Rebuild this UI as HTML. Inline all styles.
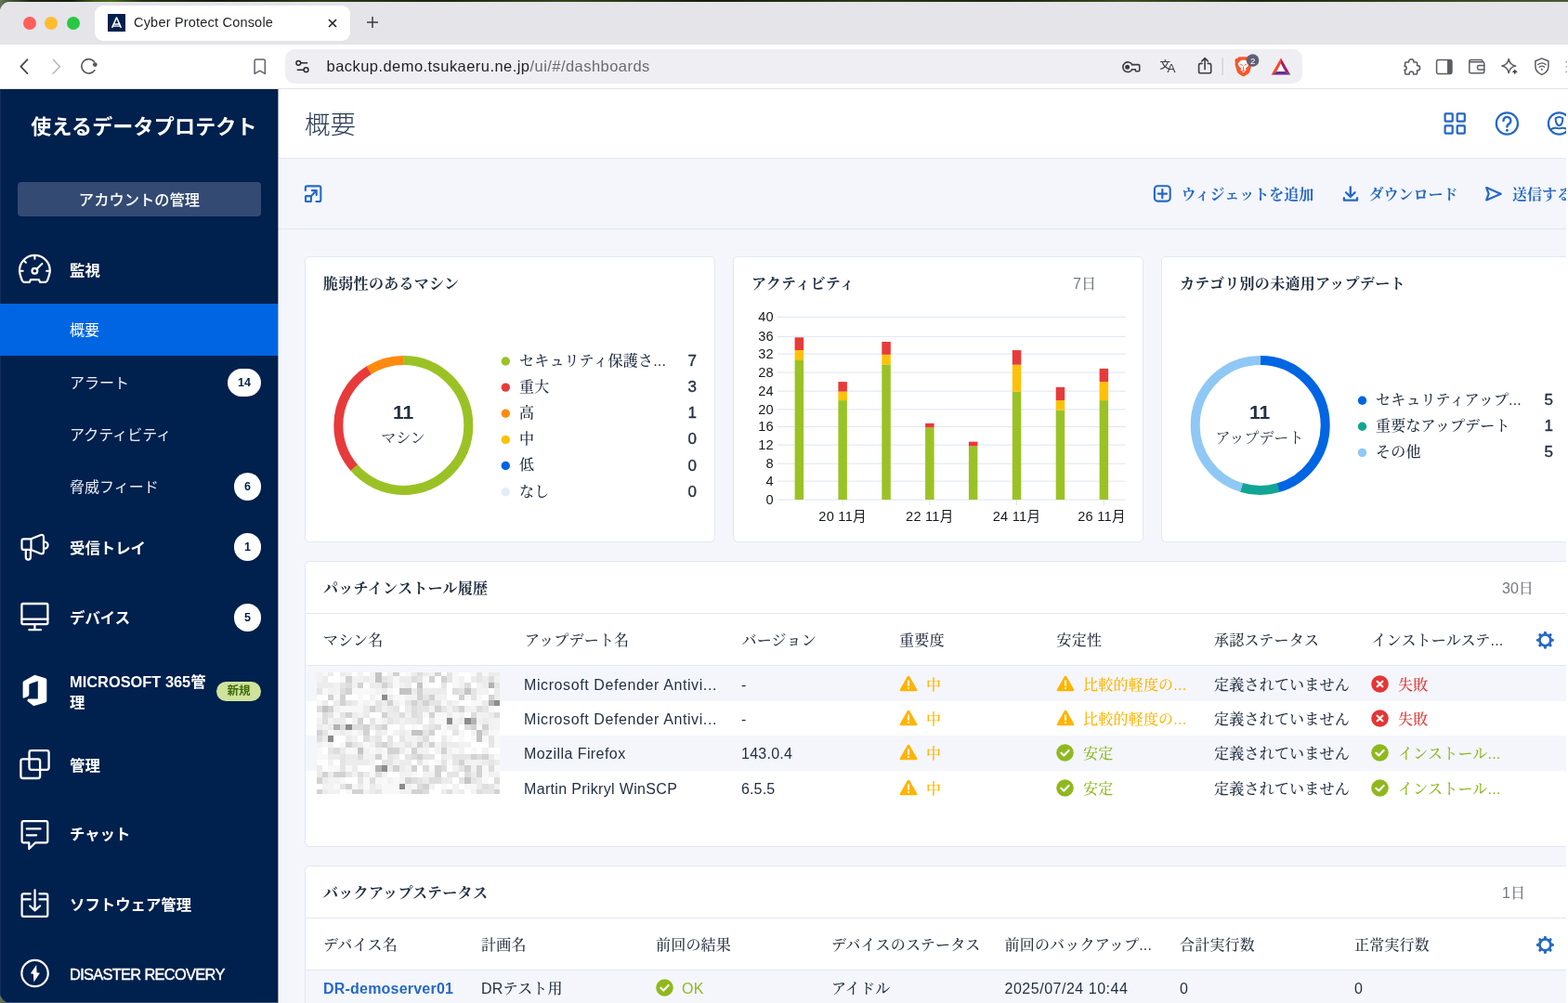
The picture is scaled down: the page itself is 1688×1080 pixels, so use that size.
<!DOCTYPE html>
<html lang="ja">
<head>
<meta charset="utf-8">
<title>Cyber Protect Console</title>
<style>
*{box-sizing:border-box;margin:0;padding:0}
html,body{width:1688px;height:1080px;overflow:hidden;background:#1d2a14}
body{background:linear-gradient(90deg,#66745a 0,#4d5b40 .5%,#1b2613 2%,#141c0e 4.5%,#3d5a17 6%,#4b6a1c 7%,#243212 9%,#131a0d 14%,#2c3d18 20%,#1a2410 28%,#33461c 36%,#151d0e 45%,#2a3a17 55%,#1a2410 64%,#3a4f1e 72%,#1c2711 80%,#2e4019 90%,#4a5a36 100%)}
body{position:relative;font-family:"Liberation Sans","Noto Sans CJK JP",sans-serif;color:#243143}
.abs{position:absolute}
#win{will-change:transform;position:absolute;left:0;top:2px;width:1688px;height:1078px;background:#fff;border-radius:11px 0 0 11px;overflow:hidden}
/* ---------- browser chrome ---------- */
#tabstrip{position:absolute;left:0;top:0;width:1688px;height:46px;background:#e4e4e9}
.tl{position:absolute;top:16px;width:14px;height:14px;border-radius:50%}
#tab{position:absolute;left:102px;top:4px;width:275px;height:38px;background:#fff;border-radius:9px}
#tabtitle{position:absolute;left:144px;top:14.4px;font-size:14.5px;letter-spacing:.2px;line-height:17px;color:#1f2023;white-space:nowrap}
#navbar{position:absolute;left:0;top:46px;width:1688px;height:48px;background:#fff;border-bottom:1px solid #e2e3e8}
#urlbar{position:absolute;left:307px;top:5px;width:1095px;height:37px;background:#efeff3;border-radius:10px}
#url{position:absolute;left:44.5px;top:9px;font-size:16.5px;letter-spacing:.45px;line-height:19px;color:#1f2023;white-space:nowrap}
#url span{color:#6a6b70}
/* ---------- sidebar ---------- */
#side{position:absolute;left:0;top:94.3px;width:299px;height:983.7px;background:#00204d;color:#fff;box-shadow:inset 1px 0 0 #132e5b,inset 0 -1px 0 #3d5479,1px 0 0 #8f9db2}
#brand{position:absolute;left:0;top:26px;width:299px;text-align:center;font-size:22px;font-weight:700;line-height:30px;letter-spacing:.2px;padding-left:11px}
#acct{position:absolute;left:19px;top:100px;width:262px;height:37px;border-radius:4px;background:#334a73;font-size:16.3px;font-weight:500;line-height:38px;text-align:center}
.nav{position:absolute;left:75px;font-size:16.4px;font-weight:700;line-height:24px;white-space:nowrap}
.sub{position:absolute;left:75px;font-size:16px;font-weight:400;line-height:24px;white-space:nowrap;color:#e9eef7}
#active{position:absolute;left:0;top:231px;width:299px;box-shadow:1px 0 0 #8fb4ee;height:56px;background:#0065e3}
.badge{position:absolute;height:30px;min-width:30px;border-radius:15px;background:#fff;color:#00204d;font-size:12.5px;font-weight:700;line-height:30px;text-align:center}
.ico{position:absolute}
/* ---------- main ---------- */
#main{position:absolute;left:300px;top:94px;width:1386.4px;height:984px;background:#f4f6fb;overflow:hidden;font-family:"Liberation Sans","Noto Serif CJK JP","Noto Serif CJK SC",serif}
#hdr{position:absolute;left:0;top:0;width:1388px;height:75px;background:#fff;border-bottom:1px solid #e1e8f4}
#ttl{position:absolute;left:28px;top:19px;font-family:"Liberation Sans","Noto Sans CJK JP",sans-serif;font-weight:300;font-size:27.5px;line-height:40px;color:#2b3a52}
#tbar{position:absolute;left:0;top:75px;width:1388px;height:76px;border-bottom:1px solid #e1e8f4}
.tb{position:absolute;top:102px;font-size:16px;font-weight:700;line-height:24px;color:#2668c5;white-space:nowrap}
.card{position:absolute;background:#fff;border:1px solid #e1e8f3;border-radius:5px}
.ct{position:absolute;left:19px;top:17px;font-size:16px;font-weight:700;letter-spacing:.3px;line-height:24px;color:#243143;white-space:nowrap}
.cr{position:absolute;top:17px;font-size:16px;font-weight:500;line-height:24px;color:#757a83;white-space:nowrap}
#ov{position:absolute;left:-300px;top:-96px;width:1688px;height:1080px}
.dn{position:absolute;width:100px;text-align:center;font-size:21px;font-weight:700;line-height:28px;color:#243143}
.dl{position:absolute;width:100px;text-align:center;font-size:16px;line-height:24px;color:#243143;white-space:nowrap}
.lg{position:absolute;margin-top:.4px;font-size:16px;font-weight:500;letter-spacing:.2px;line-height:24px;color:#243143;white-space:nowrap}
.ln{position:absolute;width:50px;text-align:right;font-size:17px;line-height:24px;color:#243143;margin-top:.5px;-webkit-text-stroke:.35px #243143}
.hl{position:absolute;height:1px;background:#e1e8f3}
.rowbg{position:absolute;background:#f4f6fb}
.th{position:absolute;font-size:16px;font-weight:500;letter-spacing:.2px;line-height:24px;color:#2b3645;white-space:nowrap}
.td{position:absolute;font-size:16px;font-weight:500;letter-spacing:.22px;margin-top:.7px;line-height:24px;color:#243143;white-space:nowrap}
</style>
</head>
<body>
<div id="win">
  <!-- BROWSER CHROME -->
  <div id="tabstrip">
    <div class="tl" style="left:25px;background:#fe5f57"></div>
    <div class="tl" style="left:48px;background:#febc2e"></div>
    <div class="tl" style="left:72px;background:#28c840"></div>
    <div id="tab"></div>
    <svg class="abs" style="left:115.6px;top:13.4px" width="19" height="19" viewBox="0 0 19 19"><rect width="19" height="19" fill="#00204d"/><path d="M4.6 14.9L9.5 3.9L14.4 14.9M5.6 10.9H13.4M4.7 13.1H14.3" stroke="#fff" stroke-width="1.45" fill="none" stroke-linejoin="round"/></svg>
    <div id="tabtitle">Cyber Protect Console</div>
    <svg class="abs" style="left:352px;top:17px" width="12" height="12" viewBox="0 0 12 12"><path d="M2 2 L10 10 M10 2 L2 10" stroke="#1f2023" stroke-width="1.6" fill="none"/></svg>
    <svg class="abs" style="left:394px;top:15px" width="14" height="14" viewBox="0 0 14 14"><path d="M7 1 V13 M1 7 H13" stroke="#3a3b40" stroke-width="1.5" fill="none"/></svg>
  </div>
  <div id="navbar">
<div id="urlbar"><div id="url">backup.demo.tsukaeru.ne.jp<span>/ui/#/dashboards</span></div></div>
    <svg class="abs" style="left:0;top:0" width="1688" height="48" viewBox="0 48 1688 48" fill="none" stroke-linecap="round" stroke-linejoin="round">
    <!-- back / forward / reload -->
    <path d="M29.5 64.2L22.4 71.7L29.5 79.1" stroke="#494b51" stroke-width="1.9"/>
    <path d="M57.3 64.2L64.4 71.7L57.3 79.1" stroke="#b4b5ba" stroke-width="1.5"/>
    <path d="M101.9 75.6A7.7 7.7 0 1 1 101.6 66.6" stroke="#55575d" stroke-width="1.7"/>
    <circle cx="102.3" cy="69.6" r="2.4" fill="#55575d"/>
    <!-- bookmark -->
    <path d="M274.1 79.4V65.6Q274.1 63.9 275.8 63.9H283.6Q285.3 63.9 285.3 65.6V79.4L279.7 76.2Z" stroke="#5f6368" stroke-width="1.5"/>
    <!-- tune -->
    <g stroke="#2a2b2f" stroke-width="1.5"><circle cx="321.3" cy="67.8" r="2.4"/><path d="M324 67.8H330.6M320.3 75.2H326.9"/><circle cx="329.5" cy="75.2" r="2.4"/></g>
    <!-- key -->
    <g stroke="#3c3d42" stroke-width="1.6"><path d="M1218.6 69.6H1225.6Q1226.7 69.6 1226.7 70.7V75.6Q1226.7 76.7 1225.6 76.7H1223.2Q1222.4 76.7 1222.4 75.9V74.8H1218.6"/><path d="M1218.8 69.6A5.3 5.3 0 1 0 1218.8 74.8"/><circle cx="1213.6" cy="72.2" r="1.7" fill="#3c3d42"/></g>
    <!-- share -->
    <g stroke="#3c3d42" stroke-width="1.6"><path d="M1294 68.4H1292.4Q1290.6 68.4 1290.6 70.2V77Q1290.6 78.8 1292.4 78.8H1301.9Q1303.7 78.8 1303.7 77V70.2Q1303.7 68.4 1301.9 68.4H1300.3"/><path d="M1297.1 74.6V62.8M1293.8 65.9L1297.1 62.6L1300.4 65.9"/></g>
    <path d="M1316.2 62.4V80.6" stroke="#c6c7cd" stroke-width="1"/>
    <!-- brave -->
    <path d="M1333.6 61.2H1343.6L1345.2 63L1346.9 62.9L1347.9 65.6L1347.3 67.2L1347.8 68.9L1345.4 77.2Q1344.8 78.6 1343.6 79.4L1339.6 82.1Q1338.6 82.6 1337.6 82.1L1333.6 79.4Q1332.4 78.6 1331.8 77.2L1329.4 68.9L1329.9 67.2L1329.3 65.6L1330.3 62.9L1332 63Z" fill="#fb542b" stroke="none"/>
    <path d="M1338.6 64.6L1341.8 65.2L1344.6 68.6L1343.4 71.6L1341 73.6L1341.6 75.6L1338.6 78.4L1335.6 75.6L1336.2 73.6L1333.8 71.6L1332.6 68.6L1335.4 65.2Z" fill="#fff" stroke="none"/>
    <path d="M1335.6 69.4L1337.4 70.2M1341.6 69.4L1339.8 70.2M1338.6 72V75.4M1337.2 76.2H1340" stroke="#fb542b" stroke-width="1"/>
    <circle cx="1348.6" cy="65" r="6.8" fill="#5e6173" stroke="none"/>
    <!-- BAT -->
    <path d="M1378.9 62.4L1368.6 80.6L1378.9 74.6Z" fill="#ff4724" stroke="none"/>
    <path d="M1378.9 62.4L1389.2 80.6L1378.9 74.6Z" fill="#9e1f63" stroke="none"/>
    <path d="M1368.6 80.6H1389.2L1378.9 74.6Z" fill="#662d91" stroke="none"/>
    <path d="M1378.9 68.6L1374.2 77H1383.6Z" fill="#fff" stroke="none"/>
    <!-- puzzle -->
    <path d="M1516.6 66.4A2.7 2.7 0 0 1 1522 66.4V67H1524.6Q1525.6 67 1525.6 68V70.6H1526A2.6 2.6 0 0 1 1526 75.8H1525.6V79Q1525.6 80 1524.6 80H1521.6V79.2A2.2 2.2 0 0 0 1517.2 79.2V80H1513.6Q1512.6 80 1512.6 79V75.6H1511.8A2.3 2.3 0 0 0 1511.8 71H1512.6V68Q1512.6 67 1513.6 67H1516.6Z" stroke="#5a5d63" stroke-width="1.6"/>
    <!-- sidebar panel -->
    <rect x="1546.6" y="64.6" width="16.2" height="14.8" rx="1.6" stroke="#5a5d63" stroke-width="1.5"/><path d="M1558.8 64.6H1561.6Q1562.8 64.6 1562.8 65.8V78.2Q1562.8 79.4 1561.6 79.4H1558.8Z" fill="#5a5d63" stroke="#5a5d63" stroke-width="1"/>
    <!-- wallet -->
    <g stroke="#5a5d63" stroke-width="1.5"><path d="M1581.8 66.8V77.2Q1581.8 78.8 1583.4 78.8H1596.2Q1597.8 78.8 1597.8 77.2V68.4Q1597.8 66.8 1596.2 66.8H1583.4Q1581.8 66.8 1581.8 65.6Q1581.8 64.4 1583.4 64.4H1594.6Q1596 64.4 1596.2 66.4"/><path d="M1597.8 70.4H1592.2Q1590.6 70.4 1590.6 72V73.4Q1590.6 75 1592.2 75H1597.8"/></g>
    <!-- sparkle -->
    <path d="M1624.2 63.4Q1625.2 69.8 1631.6 71Q1625.2 72.2 1624.2 78.6Q1623.2 72.2 1616.8 71Q1623.2 69.8 1624.2 63.4Z" stroke="#5a5d63" stroke-width="1.5"/>
    <path d="M1630.8 74.2Q1631.3 76.8 1633.9 77.3Q1631.3 77.8 1630.8 80.4Q1630.3 77.8 1627.7 77.3Q1630.3 76.8 1630.8 74.2Z" fill="#45474c" stroke="none"/>
    <!-- shield wifi -->
    <path d="M1659.9 62.9L1666.9 65.7V71.4Q1666.9 77.4 1659.9 80.4Q1652.9 77.4 1652.9 71.4V65.7Z" stroke="#5a5d63" stroke-width="1.5"/>
    <path d="M1655.6 69.6Q1659.9 66.2 1664.2 69.6M1657.2 72.2Q1659.9 70.2 1662.6 72.2" stroke="#5a5d63" stroke-width="1.3"/><circle cx="1659.9" cy="74.8" r="1" fill="#5a5d63"/>
    <!-- menu dots (clipped) -->
    <path d="M1686.2 66.6V66.7M1686.2 72V72.1M1686.2 77.4V77.5" stroke="#9a9ca2" stroke-width="1.6"/>
    </svg>
    <div class="abs" style="left:1248.5px;top:15px;font-size:11.5px;line-height:14px;color:#3c3d42;font-family:'Liberation Sans','Noto Sans CJK JP',sans-serif;font-weight:500">文</div>
    <div class="abs" style="left:1256.6px;top:19.4px;font-size:13.5px;line-height:14px;color:#3c3d42">A</div>
    <div class="abs" style="left:1343.6px;top:11.6px;width:10px;text-align:center;font-size:9.5px;line-height:11px;color:#fff">2</div>

  </div>

  <!-- SIDEBAR -->
  <div id="side">
<svg class="abs" style="left:0;top:0" width="299" height="984" viewBox="0 96 299 984" fill="none" stroke="#fff" stroke-width="2.2" stroke-linecap="round" stroke-linejoin="round">
<!-- gauge (監視) -->
<g transform="translate(19.5 273.5)">
<path d="M12.3 30.3H7.2C5.4 30.3 4.6 29.6 4.1 28C2.6 24 1.5 21 1.5 17.8A16.4 16.4 0 0 1 34.3 17.8C34.3 21 33.2 24 31.7 28C31.2 29.6 30.4 30.3 28.6 30.3H23.6L22.4 27.7H13.5Z"/>
<circle cx="17.9" cy="18.3" r="2.9"/>
<path d="M20 16.2L25.8 10.4M17.9 2.4V5.2M2.6 18.3H5.2M30.6 18.3H33.2M6.6 7.4L8.4 9.2" stroke-width="2.1"/>
</g>
<!-- megaphone (受信トレイ) -->
<g transform="translate(20 574)">
<path d="M13.5 6.3H5.5Q3.5 6.3 3.5 8.3V15.9Q3.5 17.9 5.5 17.9H13.5ZM13.5 6.3L23.4 2.2Q26.9 1 27 4.6V19.6Q26.9 23.2 23.4 22L13.5 17.9"/>
<path d="M28 9.5A3.6 3.6 0 0 1 28 16.7"/>
<path d="M7.8 18.2V26A2.55 2.55 0 0 0 12.9 26V19.6"/>
</g>
<!-- monitor (デバイス) -->
<g transform="translate(20 646)" stroke-width="2.3">
<rect x="3.4" y="4" width="28" height="22.2" rx="1.6"/>
<path d="M3.4 20.6H31.4M17.4 26.2V32.2M11.4 32.2H23.9"/>
</g>
<!-- office -->
<path transform="translate(20 724)" fill="#fff" stroke="none" d="M17.3 2.8L28.9 6.3Q30.3 6.8 30.3 8.2V30.4Q30.3 31.9 28.9 32.4L16.8 36Q16.2 36.1 15.7 35.7L9.9 31.2Q9 30.4 9.6 29.4L10.4 28.5H20.8V9.3L12.4 12.2Q11.3 12.6 11.3 13.8V23.6Q11.3 25.2 9.9 25.9L6.2 27.6Q4.6 28.2 4.6 26.4V11Q4.6 9.9 5.7 9.3Z"/>
<!-- management (管理) -->
<g stroke-width="2.3">
<rect x="31.5" y="808.1" width="21.1" height="20.7" rx="2.2"/>
<rect x="22.4" y="817.4" width="20.7" height="20.6" rx="2.2"/>
</g>
<!-- chat -->
<g>
<path d="M25.4 884.1H49.5Q51.3 884.1 51.3 885.9V905.5Q51.3 907.3 49.5 907.3H38.2L31.3 914V907.3H25.4Q23.6 907.3 23.6 905.5V885.9Q23.6 884.1 25.4 884.1Z"/>
<path d="M28.8 892.4H43.6M28.8 899.3H39.2"/>
</g>
<!-- software mgmt -->
<g>
<path d="M32.7 962.4H25.4Q23.6 962.4 23.6 964.2V985.1Q23.6 986.9 25.4 986.9H49.5Q51.3 986.9 51.3 985.1V964.2Q51.3 962.4 49.5 962.4H42.4M23.6 968.4H32.7M42.4 968.4H51.3"/>
<path d="M37.55 958.4V980.2M32.2 975.5L37.55 980.4L43.1 975.5"/>
</g>
<!-- disaster recovery -->
<circle cx="37.55" cy="1048" r="14.2"/>
<path fill="#fff" stroke="none" d="M39.2 1039L32.9 1048.2L35.9 1048.7L36.4 1057.5L42.9 1047.8L39.6 1047.3Z"/>
</svg>
    <div id="brand">使えるデータプロテクト</div>
    <div id="acct">アカウントの管理</div>
    <div id="active"></div>
    <div class="nav" style="top:182.5px">監視</div>
    <div class="sub" style="top:248px;color:#fff">概要</div>
    <div class="sub" style="top:304.7px">アラート</div>
    <div class="sub" style="top:361px">アクティビティ</div>
    <div class="sub" style="top:417.2px">脅威フィード</div>
    <div class="nav" style="top:482px">受信トレイ</div>
    <div class="nav" style="top:557px">デバイス</div>
    <div class="nav" style="top:626.5px;line-height:22.2px">MICROSOFT 365管<br>理</div>
    <div class="nav" style="top:716.2px">管理</div>
    <div class="nav" style="top:789.6px">チャット</div>
    <div class="nav" style="top:865.7px">ソフトウェア管理</div>
    <div class="nav" style="top:941px;font-weight:400;font-size:16.4px;letter-spacing:-.68px;-webkit-text-stroke:.4px #fff">DISASTER RECOVERY</div>
    <div class="badge" style="left:245px;top:300.5px;width:36px">14</div>
    <div class="badge" style="left:252px;top:412.5px;min-width:29px">6</div>
    <div class="badge" style="left:252px;top:478px;min-width:29px">1</div>
    <div class="badge" style="left:252px;top:553.5px;min-width:29px">5</div>
    <div class="badge" style="left:233px;top:637.3px;width:48px;height:21px;line-height:21px;background:#cfe39a;color:#3f6b0c;font-size:12.5px">新規</div>
  </div>

  <!-- MAIN -->
  <div id="main">
    <div class="abs" style="left:0;top:0;width:1px;height:984px;background:#fff"></div>
    <div id="hdr"><div id="ttl">概要</div></div>
    <div id="tbar"></div>
    <div class="tb" style="left:971.5px">ウィジェットを追加</div>
    <div class="tb" style="left:1173.5px">ダウンロード</div>
    <div class="tb" style="left:1328px">送信する</div>

    <div class="card" id="c1" style="left:28px;top:180px;width:442px;height:308px"><div class="ct">脆弱性のあるマシン</div></div>
    <div class="card" id="c2" style="left:489px;top:180px;width:442px;height:308px"><div class="ct">アクティビティ</div><div class="cr" style="left:365px">7日</div></div>
    <div class="card" id="c3" style="left:950px;top:180px;width:460px;height:308px"><div class="ct">カテゴリ別の未適用アップデート</div></div>
    <div class="card" id="c4" style="left:28px;top:508px;width:1400px;height:308px"><div class="ct">パッチインストール履歴</div><div class="cr" style="left:1288px">30日</div></div>
    <div class="card" id="c5" style="left:28px;top:836px;width:1400px;height:308px"><div class="ct">バックアップステータス</div><div class="cr" style="left:1288px">1日</div></div>
<div id="ov">
<svg class="abs" style="left:0;top:0" width="1688" height="1080" viewBox="0 0 1688 1080">
<!-- donut 1 -->
<circle cx="434.3" cy="457.9" r="70" fill="none" stroke="#9bc225" stroke-width="10" stroke-dasharray="280.29 159.54" stroke-dashoffset="0.00" transform="rotate(-90 434.3 457.9)"/>
<circle cx="434.3" cy="457.9" r="70" fill="none" stroke="#e83a3a" stroke-width="10" stroke-dasharray="120.35 319.47" stroke-dashoffset="-279.89" transform="rotate(-90 434.3 457.9)"/>
<circle cx="434.3" cy="457.9" r="70" fill="none" stroke="#ff8a0f" stroke-width="10" stroke-dasharray="40.38 399.44" stroke-dashoffset="-399.84" transform="rotate(-90 434.3 457.9)"/>
<!-- donut 3 -->
<circle cx="1356.7" cy="457.9" r="70" fill="none" stroke="#0065e3" stroke-width="10" stroke-dasharray="200.32 239.50" stroke-dashoffset="0.00" transform="rotate(-90 1356.7 457.9)"/>
<circle cx="1356.7" cy="457.9" r="70" fill="none" stroke="#12a594" stroke-width="10" stroke-dasharray="40.38 399.44" stroke-dashoffset="-199.92" transform="rotate(-90 1356.7 457.9)"/>
<circle cx="1356.7" cy="457.9" r="70" fill="none" stroke="#8fc8f5" stroke-width="10" stroke-dasharray="200.32 239.50" stroke-dashoffset="-239.90" transform="rotate(-90 1356.7 457.9)"/>
<circle cx="544.3" cy="389.0" r="4.7" fill="#9bc225"/>
<circle cx="544.3" cy="417.1" r="4.7" fill="#e83a3a"/>
<circle cx="544.3" cy="445.3" r="4.7" fill="#ff8a0f"/>
<circle cx="544.3" cy="473.4" r="4.7" fill="#ffc107"/>
<circle cx="544.3" cy="501.5" r="4.7" fill="#0065e3"/>
<circle cx="544.3" cy="529.7" r="4.7" fill="#e4ecfb"/>
<circle cx="1466.5" cy="431.3" r="4.7" fill="#0065e3"/>
<circle cx="1466.5" cy="459.3" r="4.7" fill="#12a594"/>
<circle cx="1466.5" cy="487.4" r="4.7" fill="#8fc8f5"/>
</svg>
<div class="dn" style="left:384px;top:430px">11</div><div class="dl" style="left:384px;top:460px">マシン</div>
<div class="dn" style="left:1306px;top:430px">11</div><div class="dl" style="left:1306px;top:460px">アップデート</div>
<div class="lg" style="left:559px;top:376.5px">セキュリティ保護さ...</div><div class="ln" style="left:700px;top:376.5px">7</div>
<div class="lg" style="left:559px;top:404.6px">重大</div><div class="ln" style="left:700px;top:404.6px">3</div>
<div class="lg" style="left:559px;top:432.8px">高</div><div class="ln" style="left:700px;top:432.8px">1</div>
<div class="lg" style="left:559px;top:460.9px">中</div><div class="ln" style="left:700px;top:460.9px">0</div>
<div class="lg" style="left:559px;top:489.0px">低</div><div class="ln" style="left:700px;top:489.0px">0</div>
<div class="lg" style="left:559px;top:517.2px">なし</div><div class="ln" style="left:700px;top:517.2px">0</div>
<div class="lg" style="left:1481px;top:418.8px">セキュリティアップ...</div><div class="ln" style="left:1622px;top:418.8px">5</div>
<div class="lg" style="left:1481px;top:446.8px">重要なアップデート</div><div class="ln" style="left:1622px;top:446.8px">1</div>
<div class="lg" style="left:1481px;top:474.9px">その他</div><div class="ln" style="left:1622px;top:474.9px">5</div>
<svg class="abs" style="left:0;top:0" width="1688" height="1080" viewBox="0 0 1688 1080" shape-rendering="auto">
<!-- bar chart -->
<rect x="836.7" y="340.8" width="375.1" height="1" fill="#dde5f3"/>
<rect x="836.7" y="361.8" width="375.1" height="1" fill="#dde5f3"/>
<rect x="836.7" y="380.6" width="375.1" height="1" fill="#dde5f3"/>
<rect x="836.7" y="400.5" width="375.1" height="1" fill="#dde5f3"/>
<rect x="836.7" y="420.6" width="375.1" height="1" fill="#dde5f3"/>
<rect x="836.7" y="440.4" width="375.1" height="1" fill="#dde5f3"/>
<rect x="836.7" y="459.0" width="375.1" height="1" fill="#dde5f3"/>
<rect x="836.7" y="478.6" width="375.1" height="1" fill="#dde5f3"/>
<rect x="836.7" y="498.7" width="375.1" height="1" fill="#dde5f3"/>
<rect x="836.7" y="517.6" width="375.1" height="1" fill="#dde5f3"/>
<rect x="836.7" y="537.6" width="375.1" height="1" fill="#dde5f3"/>
<rect x="906.6" y="538" width="1" height="6" fill="#dde5f3"/>
<rect x="1000.3" y="538" width="1" height="6" fill="#dde5f3"/>
<rect x="1094.0" y="538" width="1" height="6" fill="#dde5f3"/>
<rect x="1187.8" y="538" width="1" height="6" fill="#dde5f3"/>
<rect x="855.6" y="388.0" width="9.5" height="150.0" fill="#9bc225"/>
<rect x="855.6" y="377.1" width="9.5" height="10.9" fill="#ffc107"/>
<rect x="855.6" y="363.3" width="9.5" height="13.8" fill="#e83a3a"/>
<rect x="902.4" y="431.1" width="9.5" height="106.9" fill="#9bc225"/>
<rect x="902.4" y="421.6" width="9.5" height="9.5" fill="#ffc107"/>
<rect x="902.4" y="411.1" width="9.5" height="10.5" fill="#e83a3a"/>
<rect x="949.3" y="392.4" width="9.5" height="145.6" fill="#9bc225"/>
<rect x="949.3" y="381.8" width="9.5" height="10.6" fill="#ffc107"/>
<rect x="949.3" y="368.0" width="9.5" height="13.8" fill="#e83a3a"/>
<rect x="996.1" y="460.4" width="9.5" height="77.6" fill="#9bc225"/>
<rect x="996.1" y="455.8" width="9.5" height="4.6" fill="#e83a3a"/>
<rect x="1042.9" y="480.4" width="9.5" height="57.6" fill="#9bc225"/>
<rect x="1042.9" y="475.6" width="9.5" height="4.8" fill="#e83a3a"/>
<rect x="1089.8" y="421.6" width="9.5" height="116.4" fill="#9bc225"/>
<rect x="1089.8" y="392.7" width="9.5" height="28.9" fill="#ffc107"/>
<rect x="1089.8" y="377.1" width="9.5" height="15.6" fill="#e83a3a"/>
<rect x="1136.7" y="441.6" width="9.5" height="96.4" fill="#9bc225"/>
<rect x="1136.7" y="431.1" width="9.5" height="10.5" fill="#ffc107"/>
<rect x="1136.7" y="416.9" width="9.5" height="14.2" fill="#e83a3a"/>
<rect x="1183.6" y="431.1" width="9.5" height="106.9" fill="#9bc225"/>
<rect x="1183.6" y="411.1" width="9.5" height="20.0" fill="#ffc107"/>
<rect x="1183.6" y="396.9" width="9.5" height="14.2" fill="#e83a3a"/>
<g font-family="Liberation Sans, Noto Sans CJK JP, sans-serif" font-size="14.6" letter-spacing=".25" fill="#15181c">
<text x="832.9" y="345.9" text-anchor="end">40</text>
<text x="832.9" y="366.9" text-anchor="end">36</text>
<text x="832.9" y="385.7" text-anchor="end">32</text>
<text x="832.9" y="405.6" text-anchor="end">28</text>
<text x="832.9" y="425.7" text-anchor="end">24</text>
<text x="832.9" y="445.5" text-anchor="end">20</text>
<text x="832.9" y="464.1" text-anchor="end">16</text>
<text x="832.9" y="483.7" text-anchor="end">12</text>
<text x="832.9" y="503.8" text-anchor="end">8</text>
<text x="832.9" y="522.7" text-anchor="end">4</text>
<text x="832.9" y="542.7" text-anchor="end">0</text>
<text x="907.1" y="561.4" text-anchor="middle">20 11月</text>
<text x="1000.8" y="561.4" text-anchor="middle">22 11月</text>
<text x="1094.5" y="561.4" text-anchor="middle">24 11月</text>
<text x="1186" y="561.4" text-anchor="middle">26 11月</text>
</g>
</svg>
<!-- table 1 -->
<div class="hl" style="left:329px;top:660px;width:1400px"></div>
<div class="hl" style="left:329px;top:716px;width:1400px"></div>
<div class="rowbg" style="left:329px;top:717px;width:1400px;height:37.5px"></div>
<div class="rowbg" style="left:329px;top:792px;width:1400px;height:37.5px"></div>
<div class="th" style="left:348px;top:677.5px">マシン名</div>
<div class="th" style="left:565px;top:677.5px">アップデート名</div>
<div class="th" style="left:798.5px;top:677.5px">バージョン</div>
<div class="th" style="left:968px;top:677.5px">重要度</div>
<div class="th" style="left:1137.5px;top:677.5px">安定性</div>
<div class="th" style="left:1307px;top:677.5px">承認ステータス</div>
<div class="th" style="left:1476.5px;top:677.5px">インストールステ...</div>
<div class="td" style="left:564px;top:725px;letter-spacing:0.6px">Microsoft Defender Antivi...</div>
<div class="td" style="left:798px;top:725px">-</div>
<svg class="abs" style="left:967.5px;top:726.8px" width="20" height="18" viewBox="0 0 20 18"><path d="M10 .8 Q10.9 .8 11.4 1.7 L19.2 15.4 Q19.9 17 18.2 17.2 H1.8 Q.1 17 .8 15.4 L8.6 1.7 Q9.1 .8 10 .8 Z" fill="#ffb400"/><rect x="9" y="5.6" width="2" height="6.2" rx=".6" fill="#fff"/><rect x="9" y="13" width="2" height="2.1" rx=".6" fill="#fff"/></svg>
<div class="td" style="left:997px;top:725px;color:#ffb400">中</div>
<svg class="abs" style="left:1137px;top:726.8px" width="20" height="18" viewBox="0 0 20 18"><path d="M10 .8 Q10.9 .8 11.4 1.7 L19.2 15.4 Q19.9 17 18.2 17.2 H1.8 Q.1 17 .8 15.4 L8.6 1.7 Q9.1 .8 10 .8 Z" fill="#ffb400"/><rect x="9" y="5.6" width="2" height="6.2" rx=".6" fill="#fff"/><rect x="9" y="13" width="2" height="2.1" rx=".6" fill="#fff"/></svg>
<div class="td" style="left:1166px;top:725px;color:#ffb400">比較的軽度の...</div>
<div class="td" style="left:1307px;top:725px">定義されていません</div>
<svg class="abs" style="left:1476px;top:726.8px" width="19" height="19" viewBox="0 0 19 19"><circle cx="9.5" cy="9.5" r="9.3" fill="#e53535"/><path d="M6.7 6.7 L12.3 12.3 M12.3 6.7 L6.7 12.3" fill="none" stroke="#fff" stroke-width="2.3" stroke-linecap="round"/></svg>
<div class="td" style="left:1505px;top:725px;color:#e53535">失敗</div>
<div class="td" style="left:564px;top:762.3px;letter-spacing:0.6px">Microsoft Defender Antivi...</div>
<div class="td" style="left:798px;top:762.3px">-</div>
<svg class="abs" style="left:967.5px;top:764.1px" width="20" height="18" viewBox="0 0 20 18"><path d="M10 .8 Q10.9 .8 11.4 1.7 L19.2 15.4 Q19.9 17 18.2 17.2 H1.8 Q.1 17 .8 15.4 L8.6 1.7 Q9.1 .8 10 .8 Z" fill="#ffb400"/><rect x="9" y="5.6" width="2" height="6.2" rx=".6" fill="#fff"/><rect x="9" y="13" width="2" height="2.1" rx=".6" fill="#fff"/></svg>
<div class="td" style="left:997px;top:762.3px;color:#ffb400">中</div>
<svg class="abs" style="left:1137px;top:764.1px" width="20" height="18" viewBox="0 0 20 18"><path d="M10 .8 Q10.9 .8 11.4 1.7 L19.2 15.4 Q19.9 17 18.2 17.2 H1.8 Q.1 17 .8 15.4 L8.6 1.7 Q9.1 .8 10 .8 Z" fill="#ffb400"/><rect x="9" y="5.6" width="2" height="6.2" rx=".6" fill="#fff"/><rect x="9" y="13" width="2" height="2.1" rx=".6" fill="#fff"/></svg>
<div class="td" style="left:1166px;top:762.3px;color:#ffb400">比較的軽度の...</div>
<div class="td" style="left:1307px;top:762.3px">定義されていません</div>
<svg class="abs" style="left:1476px;top:764.1px" width="19" height="19" viewBox="0 0 19 19"><circle cx="9.5" cy="9.5" r="9.3" fill="#e53535"/><path d="M6.7 6.7 L12.3 12.3 M12.3 6.7 L6.7 12.3" fill="none" stroke="#fff" stroke-width="2.3" stroke-linecap="round"/></svg>
<div class="td" style="left:1505px;top:762.3px;color:#e53535">失敗</div>
<div class="td" style="left:564px;top:799.6px;letter-spacing:0.43px">Mozilla Firefox</div>
<div class="td" style="left:798px;top:799.6px;letter-spacing:0.26px">143.0.4</div>
<svg class="abs" style="left:967.5px;top:801.4px" width="20" height="18" viewBox="0 0 20 18"><path d="M10 .8 Q10.9 .8 11.4 1.7 L19.2 15.4 Q19.9 17 18.2 17.2 H1.8 Q.1 17 .8 15.4 L8.6 1.7 Q9.1 .8 10 .8 Z" fill="#ffb400"/><rect x="9" y="5.6" width="2" height="6.2" rx=".6" fill="#fff"/><rect x="9" y="13" width="2" height="2.1" rx=".6" fill="#fff"/></svg>
<div class="td" style="left:997px;top:799.6px;color:#ffb400">中</div>
<svg class="abs" style="left:1137px;top:801.4px" width="19" height="19" viewBox="0 0 19 19"><circle cx="9.5" cy="9.5" r="9.3" fill="#8fb81f"/><path d="M5.4 9.7 L8.3 12.5 L13.6 7" fill="none" stroke="#fff" stroke-width="2.2" stroke-linecap="round" stroke-linejoin="round"/></svg>
<div class="td" style="left:1166px;top:799.6px;color:#8fb81f">安定</div>
<div class="td" style="left:1307px;top:799.6px">定義されていません</div>
<svg class="abs" style="left:1476px;top:801.4px" width="19" height="19" viewBox="0 0 19 19"><circle cx="9.5" cy="9.5" r="9.3" fill="#8fb81f"/><path d="M5.4 9.7 L8.3 12.5 L13.6 7" fill="none" stroke="#fff" stroke-width="2.2" stroke-linecap="round" stroke-linejoin="round"/></svg>
<div class="td" style="left:1505px;top:799.6px;color:#8fb81f">インストール...</div>
<div class="td" style="left:564px;top:837px;letter-spacing:0.33px">Martin Prikryl WinSCP</div>
<div class="td" style="left:798px;top:837px;letter-spacing:0.14px">6.5.5</div>
<svg class="abs" style="left:967.5px;top:838.8px" width="20" height="18" viewBox="0 0 20 18"><path d="M10 .8 Q10.9 .8 11.4 1.7 L19.2 15.4 Q19.9 17 18.2 17.2 H1.8 Q.1 17 .8 15.4 L8.6 1.7 Q9.1 .8 10 .8 Z" fill="#ffb400"/><rect x="9" y="5.6" width="2" height="6.2" rx=".6" fill="#fff"/><rect x="9" y="13" width="2" height="2.1" rx=".6" fill="#fff"/></svg>
<div class="td" style="left:997px;top:837px;color:#ffb400">中</div>
<svg class="abs" style="left:1137px;top:838.8px" width="19" height="19" viewBox="0 0 19 19"><circle cx="9.5" cy="9.5" r="9.3" fill="#8fb81f"/><path d="M5.4 9.7 L8.3 12.5 L13.6 7" fill="none" stroke="#fff" stroke-width="2.2" stroke-linecap="round" stroke-linejoin="round"/></svg>
<div class="td" style="left:1166px;top:837px;color:#8fb81f">安定</div>
<div class="td" style="left:1307px;top:837px">定義されていません</div>
<svg class="abs" style="left:1476px;top:838.8px" width="19" height="19" viewBox="0 0 19 19"><circle cx="9.5" cy="9.5" r="9.3" fill="#8fb81f"/><path d="M5.4 9.7 L8.3 12.5 L13.6 7" fill="none" stroke="#fff" stroke-width="2.2" stroke-linecap="round" stroke-linejoin="round"/></svg>
<div class="td" style="left:1505px;top:837px;color:#8fb81f">インストール...</div>
<!-- table 2 -->
<div class="hl" style="left:329px;top:988px;width:1400px"></div>
<div class="hl" style="left:329px;top:1044px;width:1400px"></div>
<div class="rowbg" style="left:329px;top:1045px;width:1400px;height:37.5px"></div>
<div class="th" style="left:348px;top:1005.5px">デバイス名</div>
<div class="th" style="left:518px;top:1005.5px">計画名</div>
<div class="th" style="left:706px;top:1005.5px">前回の結果</div>
<div class="th" style="left:895px;top:1005.5px">デバイスのステータス</div>
<div class="th" style="left:1081.5px;top:1005.5px">前回のバックアップ...</div>
<div class="th" style="left:1270px;top:1005.5px">合計実行数</div>
<div class="th" style="left:1458px;top:1005.5px">正常実行数</div>
<div class="td" style="left:348px;top:1052.5px;color:#2668c5;font-weight:700;letter-spacing:0.21px">DR-demoserver01</div>
<div class="td" style="left:518px;top:1052.5px">DRテスト用</div>
<svg class="abs" style="left:706px;top:1054.3px" width="19" height="19" viewBox="0 0 19 19"><circle cx="9.5" cy="9.5" r="9.3" fill="#8fb81f"/><path d="M5.4 9.7 L8.3 12.5 L13.6 7" fill="none" stroke="#fff" stroke-width="2.2" stroke-linecap="round" stroke-linejoin="round"/></svg>
<div class="td" style="left:734px;top:1052.5px;color:#8fb81f">OK</div>
<div class="td" style="left:895px;top:1052.5px">アイドル</div>
<div class="td" style="left:1081.5px;top:1052.5px;letter-spacing:0.52px">2025/07/24 10:44</div>
<div class="td" style="left:1270px;top:1052.5px">0</div>
<div class="td" style="left:1458px;top:1052.5px">0</div>
<!-- mosaic -->
<svg class="abs" style="left:0;top:0" width="1688" height="1080" viewBox="0 0 1688 1080" shape-rendering="crispEdges">
<rect x="341.1" y="723.8" width="197.1" height="131.2" fill="#f2f2f2"/>
<path fill="#ffffff" d="M359.3 723.8h6.4v4.6h-6.4zM378.5 723.8h6.4v4.6h-6.4zM391.3 723.8h6.4v4.6h-6.4zM410.5 723.8h6.4v4.6h-6.4zM429.7 723.8h6.4v4.6h-6.4zM474.5 723.8h6.4v4.6h-6.4zM493.7 723.8h6.4v4.6h-6.4zM500.1 723.8h6.4v4.6h-6.4zM352.9 728.4h6.4v6.4h-6.4zM359.3 728.4h6.4v6.4h-6.4zM468.1 728.4h6.4v6.4h-6.4zM500.1 728.4h6.4v6.4h-6.4zM391.3 734.8h6.4v6.4h-6.4zM442.5 734.8h6.4v6.4h-6.4zM461.7 734.8h6.4v6.4h-6.4zM468.1 734.8h6.4v6.4h-6.4zM480.9 734.8h6.4v6.4h-6.4zM506.5 734.8h6.4v6.4h-6.4zM423.3 741.2h6.4v6.4h-6.4zM480.9 741.2h6.4v6.4h-6.4zM525.7 741.2h6.4v6.4h-6.4zM341.1 747.6h5.4v6.4h-5.4zM346.5 747.6h6.4v6.4h-6.4zM372.1 747.6h6.4v6.4h-6.4zM378.5 747.6h6.4v6.4h-6.4zM391.3 747.6h6.4v6.4h-6.4zM404.1 747.6h6.4v6.4h-6.4zM480.9 747.6h6.4v6.4h-6.4zM487.3 747.6h6.4v6.4h-6.4zM519.3 747.6h6.4v6.4h-6.4zM352.9 754.0h6.4v6.4h-6.4zM493.7 754.0h6.4v6.4h-6.4zM500.1 754.0h6.4v6.4h-6.4zM429.7 760.4h6.4v6.4h-6.4zM532.1 760.4h6.1v6.4h-6.1zM397.7 766.8h6.4v6.4h-6.4zM404.1 766.8h6.4v6.4h-6.4zM500.1 766.8h6.4v6.4h-6.4zM372.1 773.2h6.4v6.4h-6.4zM391.3 773.2h6.4v6.4h-6.4zM455.3 773.2h6.4v6.4h-6.4zM416.9 779.6h6.4v6.4h-6.4zM423.3 779.6h6.4v6.4h-6.4zM436.1 779.6h6.4v6.4h-6.4zM448.9 779.6h6.4v6.4h-6.4zM493.7 779.6h6.4v6.4h-6.4zM397.7 786.0h6.4v6.4h-6.4zM416.9 786.0h6.4v6.4h-6.4zM468.1 786.0h6.4v6.4h-6.4zM480.9 786.0h6.4v6.4h-6.4zM500.1 786.0h6.4v6.4h-6.4zM359.3 792.4h6.4v6.4h-6.4zM365.7 792.4h6.4v6.4h-6.4zM384.9 792.4h6.4v6.4h-6.4zM410.5 792.4h6.4v6.4h-6.4zM423.3 792.4h6.4v6.4h-6.4zM468.1 792.4h6.4v6.4h-6.4zM487.3 792.4h6.4v6.4h-6.4zM500.1 792.4h6.4v6.4h-6.4zM359.3 798.8h6.4v6.4h-6.4zM506.5 798.8h6.4v6.4h-6.4zM512.9 798.8h6.4v6.4h-6.4zM519.3 798.8h6.4v6.4h-6.4zM346.5 805.2h6.4v6.4h-6.4zM461.7 805.2h6.4v6.4h-6.4zM500.1 805.2h6.4v6.4h-6.4zM512.9 805.2h6.4v6.4h-6.4zM525.7 805.2h6.4v6.4h-6.4zM532.1 805.2h6.1v6.4h-6.1zM429.7 811.6h6.4v6.4h-6.4zM468.1 811.6h6.4v6.4h-6.4zM341.1 818.0h5.4v6.4h-5.4zM346.5 818.0h6.4v6.4h-6.4zM359.3 818.0h6.4v6.4h-6.4zM404.1 818.0h6.4v6.4h-6.4zM442.5 818.0h6.4v6.4h-6.4zM461.7 818.0h6.4v6.4h-6.4zM346.5 824.4h6.4v6.4h-6.4zM384.9 824.4h6.4v6.4h-6.4zM391.3 824.4h6.4v6.4h-6.4zM448.9 824.4h6.4v6.4h-6.4zM480.9 824.4h6.4v6.4h-6.4zM416.9 830.8h6.4v6.4h-6.4zM423.3 830.8h6.4v6.4h-6.4zM448.9 830.8h6.4v6.4h-6.4zM474.5 830.8h6.4v6.4h-6.4zM493.7 830.8h6.4v6.4h-6.4zM372.1 837.2h6.4v6.4h-6.4zM378.5 837.2h6.4v6.4h-6.4zM487.3 837.2h6.4v6.4h-6.4zM525.7 837.2h6.4v6.4h-6.4zM341.1 843.6h5.4v6.4h-5.4zM468.1 843.6h6.4v6.4h-6.4zM480.9 843.6h6.4v6.4h-6.4zM493.7 843.6h6.4v6.4h-6.4zM365.7 850.0h6.4v5.0h-6.4zM461.7 850.0h6.4v5.0h-6.4zM468.1 850.0h6.4v5.0h-6.4zM500.1 850.0h6.4v5.0h-6.4z"/>
<path fill="#f8f8f8" d="M346.5 723.8h6.4v4.6h-6.4zM436.1 723.8h6.4v4.6h-6.4zM487.3 723.8h6.4v4.6h-6.4zM506.5 723.8h6.4v4.6h-6.4zM519.3 723.8h6.4v4.6h-6.4zM365.7 728.4h6.4v6.4h-6.4zM423.3 728.4h6.4v6.4h-6.4zM455.3 728.4h6.4v6.4h-6.4zM487.3 728.4h6.4v6.4h-6.4zM423.3 734.8h6.4v6.4h-6.4zM455.3 734.8h6.4v6.4h-6.4zM487.3 734.8h6.4v6.4h-6.4zM346.5 741.2h6.4v6.4h-6.4zM378.5 741.2h6.4v6.4h-6.4zM384.9 741.2h6.4v6.4h-6.4zM391.3 741.2h6.4v6.4h-6.4zM397.7 741.2h6.4v6.4h-6.4zM416.9 741.2h6.4v6.4h-6.4zM359.3 747.6h6.4v6.4h-6.4zM384.9 747.6h6.4v6.4h-6.4zM423.3 747.6h6.4v6.4h-6.4zM429.7 747.6h6.4v6.4h-6.4zM500.1 747.6h6.4v6.4h-6.4zM512.9 747.6h6.4v6.4h-6.4zM341.1 754.0h5.4v6.4h-5.4zM384.9 754.0h6.4v6.4h-6.4zM397.7 754.0h6.4v6.4h-6.4zM429.7 754.0h6.4v6.4h-6.4zM474.5 754.0h6.4v6.4h-6.4zM506.5 754.0h6.4v6.4h-6.4zM512.9 754.0h6.4v6.4h-6.4zM365.7 760.4h6.4v6.4h-6.4zM372.1 760.4h6.4v6.4h-6.4zM378.5 760.4h6.4v6.4h-6.4zM384.9 760.4h6.4v6.4h-6.4zM525.7 760.4h6.4v6.4h-6.4zM341.1 766.8h5.4v6.4h-5.4zM359.3 766.8h6.4v6.4h-6.4zM455.3 766.8h6.4v6.4h-6.4zM468.1 766.8h6.4v6.4h-6.4zM474.5 766.8h6.4v6.4h-6.4zM487.3 766.8h6.4v6.4h-6.4zM404.1 773.2h6.4v6.4h-6.4zM468.1 773.2h6.4v6.4h-6.4zM474.5 773.2h6.4v6.4h-6.4zM442.5 779.6h6.4v6.4h-6.4zM474.5 779.6h6.4v6.4h-6.4zM512.9 779.6h6.4v6.4h-6.4zM352.9 786.0h6.4v6.4h-6.4zM378.5 786.0h6.4v6.4h-6.4zM474.5 786.0h6.4v6.4h-6.4zM493.7 786.0h6.4v6.4h-6.4zM525.7 786.0h6.4v6.4h-6.4zM532.1 786.0h6.1v6.4h-6.1zM461.7 792.4h6.4v6.4h-6.4zM480.9 792.4h6.4v6.4h-6.4zM493.7 792.4h6.4v6.4h-6.4zM506.5 792.4h6.4v6.4h-6.4zM519.3 792.4h6.4v6.4h-6.4zM532.1 792.4h6.1v6.4h-6.1zM346.5 798.8h6.4v6.4h-6.4zM365.7 798.8h6.4v6.4h-6.4zM391.3 798.8h6.4v6.4h-6.4zM532.1 798.8h6.1v6.4h-6.1zM341.1 805.2h5.4v6.4h-5.4zM372.1 805.2h6.4v6.4h-6.4zM378.5 805.2h6.4v6.4h-6.4zM397.7 805.2h6.4v6.4h-6.4zM410.5 805.2h6.4v6.4h-6.4zM436.1 805.2h6.4v6.4h-6.4zM487.3 805.2h6.4v6.4h-6.4zM506.5 805.2h6.4v6.4h-6.4zM341.1 811.6h5.4v6.4h-5.4zM346.5 811.6h6.4v6.4h-6.4zM410.5 811.6h6.4v6.4h-6.4zM532.1 811.6h6.1v6.4h-6.1zM455.3 818.0h6.4v6.4h-6.4zM468.1 818.0h6.4v6.4h-6.4zM480.9 818.0h6.4v6.4h-6.4zM352.9 824.4h6.4v6.4h-6.4zM359.3 824.4h6.4v6.4h-6.4zM372.1 824.4h6.4v6.4h-6.4zM397.7 824.4h6.4v6.4h-6.4zM461.7 824.4h6.4v6.4h-6.4zM519.3 824.4h6.4v6.4h-6.4zM532.1 824.4h6.1v6.4h-6.1zM397.7 830.8h6.4v6.4h-6.4zM442.5 830.8h6.4v6.4h-6.4zM519.3 830.8h6.4v6.4h-6.4zM365.7 837.2h6.4v6.4h-6.4zM391.3 837.2h6.4v6.4h-6.4zM404.1 837.2h6.4v6.4h-6.4zM410.5 837.2h6.4v6.4h-6.4zM423.3 837.2h6.4v6.4h-6.4zM519.3 837.2h6.4v6.4h-6.4zM359.3 843.6h6.4v6.4h-6.4zM378.5 843.6h6.4v6.4h-6.4zM391.3 843.6h6.4v6.4h-6.4zM410.5 843.6h6.4v6.4h-6.4zM416.9 843.6h6.4v6.4h-6.4zM423.3 843.6h6.4v6.4h-6.4zM442.5 843.6h6.4v6.4h-6.4zM474.5 843.6h6.4v6.4h-6.4zM500.1 843.6h6.4v6.4h-6.4zM506.5 843.6h6.4v6.4h-6.4zM372.1 850.0h6.4v5.0h-6.4zM410.5 850.0h6.4v5.0h-6.4zM416.9 850.0h6.4v5.0h-6.4zM423.3 850.0h6.4v5.0h-6.4z"/>
<path fill="#f2f2f2" d="M341.1 723.8h5.4v4.6h-5.4zM372.1 723.8h6.4v4.6h-6.4zM384.9 723.8h6.4v4.6h-6.4zM397.7 723.8h6.4v4.6h-6.4zM416.9 723.8h6.4v4.6h-6.4zM461.7 723.8h6.4v4.6h-6.4zM341.1 728.4h5.4v6.4h-5.4zM378.5 728.4h6.4v6.4h-6.4zM384.9 728.4h6.4v6.4h-6.4zM397.7 728.4h6.4v6.4h-6.4zM493.7 728.4h6.4v6.4h-6.4zM532.1 728.4h6.1v6.4h-6.1zM359.3 734.8h6.4v6.4h-6.4zM378.5 734.8h6.4v6.4h-6.4zM429.7 734.8h6.4v6.4h-6.4zM493.7 734.8h6.4v6.4h-6.4zM512.9 734.8h6.4v6.4h-6.4zM352.9 741.2h6.4v6.4h-6.4zM359.3 741.2h6.4v6.4h-6.4zM404.1 741.2h6.4v6.4h-6.4zM512.9 741.2h6.4v6.4h-6.4zM519.3 741.2h6.4v6.4h-6.4zM397.7 747.6h6.4v6.4h-6.4zM436.1 747.6h6.4v6.4h-6.4zM442.5 747.6h6.4v6.4h-6.4zM468.1 747.6h6.4v6.4h-6.4zM474.5 747.6h6.4v6.4h-6.4zM391.3 754.0h6.4v6.4h-6.4zM423.3 754.0h6.4v6.4h-6.4zM487.3 754.0h6.4v6.4h-6.4zM359.3 760.4h6.4v6.4h-6.4zM410.5 760.4h6.4v6.4h-6.4zM461.7 760.4h6.4v6.4h-6.4zM480.9 760.4h6.4v6.4h-6.4zM500.1 760.4h6.4v6.4h-6.4zM506.5 760.4h6.4v6.4h-6.4zM384.9 766.8h6.4v6.4h-6.4zM436.1 766.8h6.4v6.4h-6.4zM493.7 766.8h6.4v6.4h-6.4zM512.9 766.8h6.4v6.4h-6.4zM519.3 766.8h6.4v6.4h-6.4zM341.1 773.2h5.4v6.4h-5.4zM352.9 773.2h6.4v6.4h-6.4zM378.5 773.2h6.4v6.4h-6.4zM410.5 773.2h6.4v6.4h-6.4zM429.7 773.2h6.4v6.4h-6.4zM487.3 773.2h6.4v6.4h-6.4zM512.9 773.2h6.4v6.4h-6.4zM525.7 773.2h6.4v6.4h-6.4zM532.1 773.2h6.1v6.4h-6.1zM346.5 779.6h6.4v6.4h-6.4zM429.7 779.6h6.4v6.4h-6.4zM525.7 779.6h6.4v6.4h-6.4zM532.1 779.6h6.1v6.4h-6.1zM359.3 786.0h6.4v6.4h-6.4zM372.1 786.0h6.4v6.4h-6.4zM384.9 786.0h6.4v6.4h-6.4zM410.5 786.0h6.4v6.4h-6.4zM423.3 786.0h6.4v6.4h-6.4zM436.1 786.0h6.4v6.4h-6.4zM506.5 786.0h6.4v6.4h-6.4zM378.5 792.4h6.4v6.4h-6.4zM436.1 792.4h6.4v6.4h-6.4zM442.5 792.4h6.4v6.4h-6.4zM341.1 798.8h5.4v6.4h-5.4zM352.9 798.8h6.4v6.4h-6.4zM397.7 798.8h6.4v6.4h-6.4zM423.3 798.8h6.4v6.4h-6.4zM429.7 798.8h6.4v6.4h-6.4zM442.5 798.8h6.4v6.4h-6.4zM468.1 798.8h6.4v6.4h-6.4zM493.7 798.8h6.4v6.4h-6.4zM500.1 798.8h6.4v6.4h-6.4zM391.3 805.2h6.4v6.4h-6.4zM404.1 805.2h6.4v6.4h-6.4zM448.9 805.2h6.4v6.4h-6.4zM455.3 805.2h6.4v6.4h-6.4zM468.1 805.2h6.4v6.4h-6.4zM480.9 805.2h6.4v6.4h-6.4zM493.7 805.2h6.4v6.4h-6.4zM519.3 805.2h6.4v6.4h-6.4zM391.3 811.6h6.4v6.4h-6.4zM397.7 811.6h6.4v6.4h-6.4zM480.9 811.6h6.4v6.4h-6.4zM352.9 818.0h6.4v6.4h-6.4zM397.7 818.0h6.4v6.4h-6.4zM423.3 818.0h6.4v6.4h-6.4zM500.1 818.0h6.4v6.4h-6.4zM506.5 818.0h6.4v6.4h-6.4zM512.9 818.0h6.4v6.4h-6.4zM436.1 824.4h6.4v6.4h-6.4zM487.3 824.4h6.4v6.4h-6.4zM506.5 824.4h6.4v6.4h-6.4zM378.5 830.8h6.4v6.4h-6.4zM410.5 830.8h6.4v6.4h-6.4zM429.7 830.8h6.4v6.4h-6.4zM436.1 830.8h6.4v6.4h-6.4zM455.3 830.8h6.4v6.4h-6.4zM461.7 830.8h6.4v6.4h-6.4zM525.7 830.8h6.4v6.4h-6.4zM532.1 830.8h6.1v6.4h-6.1zM352.9 837.2h6.4v6.4h-6.4zM359.3 837.2h6.4v6.4h-6.4zM416.9 837.2h6.4v6.4h-6.4zM429.7 837.2h6.4v6.4h-6.4zM346.5 843.6h6.4v6.4h-6.4zM352.9 843.6h6.4v6.4h-6.4zM404.1 843.6h6.4v6.4h-6.4zM436.1 843.6h6.4v6.4h-6.4zM461.7 843.6h6.4v6.4h-6.4zM487.3 843.6h6.4v6.4h-6.4zM532.1 843.6h6.1v6.4h-6.1zM352.9 850.0h6.4v5.0h-6.4zM359.3 850.0h6.4v5.0h-6.4zM391.3 850.0h6.4v5.0h-6.4zM429.7 850.0h6.4v5.0h-6.4zM436.1 850.0h6.4v5.0h-6.4zM487.3 850.0h6.4v5.0h-6.4zM506.5 850.0h6.4v5.0h-6.4z"/>
<path fill="#ececec" d="M352.9 723.8h6.4v4.6h-6.4zM365.7 723.8h6.4v4.6h-6.4zM442.5 723.8h6.4v4.6h-6.4zM455.3 723.8h6.4v4.6h-6.4zM525.7 723.8h6.4v4.6h-6.4zM532.1 723.8h6.1v4.6h-6.1zM346.5 728.4h6.4v6.4h-6.4zM391.3 728.4h6.4v6.4h-6.4zM416.9 728.4h6.4v6.4h-6.4zM429.7 728.4h6.4v6.4h-6.4zM436.1 728.4h6.4v6.4h-6.4zM506.5 728.4h6.4v6.4h-6.4zM519.3 728.4h6.4v6.4h-6.4zM341.1 734.8h5.4v6.4h-5.4zM346.5 734.8h6.4v6.4h-6.4zM352.9 734.8h6.4v6.4h-6.4zM397.7 734.8h6.4v6.4h-6.4zM404.1 734.8h6.4v6.4h-6.4zM436.1 734.8h6.4v6.4h-6.4zM519.3 734.8h6.4v6.4h-6.4zM410.5 741.2h6.4v6.4h-6.4zM442.5 741.2h6.4v6.4h-6.4zM455.3 741.2h6.4v6.4h-6.4zM461.7 741.2h6.4v6.4h-6.4zM468.1 741.2h6.4v6.4h-6.4zM474.5 741.2h6.4v6.4h-6.4zM532.1 741.2h6.1v6.4h-6.1zM416.9 747.6h6.4v6.4h-6.4zM532.1 747.6h6.1v6.4h-6.1zM346.5 754.0h6.4v6.4h-6.4zM359.3 754.0h6.4v6.4h-6.4zM378.5 754.0h6.4v6.4h-6.4zM410.5 754.0h6.4v6.4h-6.4zM480.9 754.0h6.4v6.4h-6.4zM519.3 754.0h6.4v6.4h-6.4zM391.3 760.4h6.4v6.4h-6.4zM416.9 760.4h6.4v6.4h-6.4zM436.1 760.4h6.4v6.4h-6.4zM378.5 766.8h6.4v6.4h-6.4zM391.3 766.8h6.4v6.4h-6.4zM416.9 766.8h6.4v6.4h-6.4zM423.3 766.8h6.4v6.4h-6.4zM480.9 766.8h6.4v6.4h-6.4zM525.7 766.8h6.4v6.4h-6.4zM359.3 773.2h6.4v6.4h-6.4zM365.7 773.2h6.4v6.4h-6.4zM423.3 773.2h6.4v6.4h-6.4zM436.1 773.2h6.4v6.4h-6.4zM442.5 773.2h6.4v6.4h-6.4zM461.7 773.2h6.4v6.4h-6.4zM493.7 773.2h6.4v6.4h-6.4zM519.3 773.2h6.4v6.4h-6.4zM341.1 779.6h5.4v6.4h-5.4zM352.9 779.6h6.4v6.4h-6.4zM397.7 779.6h6.4v6.4h-6.4zM455.3 779.6h6.4v6.4h-6.4zM480.9 779.6h6.4v6.4h-6.4zM487.3 779.6h6.4v6.4h-6.4zM365.7 786.0h6.4v6.4h-6.4zM404.1 786.0h6.4v6.4h-6.4zM429.7 786.0h6.4v6.4h-6.4zM346.5 792.4h6.4v6.4h-6.4zM372.1 792.4h6.4v6.4h-6.4zM397.7 792.4h6.4v6.4h-6.4zM448.9 792.4h6.4v6.4h-6.4zM474.5 792.4h6.4v6.4h-6.4zM384.9 798.8h6.4v6.4h-6.4zM455.3 798.8h6.4v6.4h-6.4zM480.9 798.8h6.4v6.4h-6.4zM487.3 798.8h6.4v6.4h-6.4zM365.7 805.2h6.4v6.4h-6.4zM429.7 805.2h6.4v6.4h-6.4zM352.9 811.6h6.4v6.4h-6.4zM359.3 811.6h6.4v6.4h-6.4zM372.1 811.6h6.4v6.4h-6.4zM378.5 811.6h6.4v6.4h-6.4zM423.3 811.6h6.4v6.4h-6.4zM474.5 811.6h6.4v6.4h-6.4zM525.7 811.6h6.4v6.4h-6.4zM372.1 818.0h6.4v6.4h-6.4zM378.5 818.0h6.4v6.4h-6.4zM384.9 818.0h6.4v6.4h-6.4zM391.3 818.0h6.4v6.4h-6.4zM429.7 818.0h6.4v6.4h-6.4zM436.1 818.0h6.4v6.4h-6.4zM519.3 818.0h6.4v6.4h-6.4zM532.1 818.0h6.1v6.4h-6.1zM341.1 824.4h5.4v6.4h-5.4zM378.5 824.4h6.4v6.4h-6.4zM416.9 824.4h6.4v6.4h-6.4zM429.7 824.4h6.4v6.4h-6.4zM341.1 830.8h5.4v6.4h-5.4zM352.9 830.8h6.4v6.4h-6.4zM391.3 830.8h6.4v6.4h-6.4zM506.5 830.8h6.4v6.4h-6.4zM346.5 837.2h6.4v6.4h-6.4zM455.3 837.2h6.4v6.4h-6.4zM474.5 837.2h6.4v6.4h-6.4zM480.9 837.2h6.4v6.4h-6.4zM512.9 837.2h6.4v6.4h-6.4zM384.9 843.6h6.4v6.4h-6.4zM397.7 843.6h6.4v6.4h-6.4zM512.9 843.6h6.4v6.4h-6.4zM346.5 850.0h6.4v5.0h-6.4zM397.7 850.0h6.4v5.0h-6.4zM474.5 850.0h6.4v5.0h-6.4zM493.7 850.0h6.4v5.0h-6.4z"/>
<path fill="#e5e5e5" d="M480.9 723.8h6.4v4.6h-6.4zM512.9 723.8h6.4v4.6h-6.4zM410.5 728.4h6.4v6.4h-6.4zM448.9 728.4h6.4v6.4h-6.4zM480.9 728.4h6.4v6.4h-6.4zM512.9 728.4h6.4v6.4h-6.4zM365.7 734.8h6.4v6.4h-6.4zM416.9 734.8h6.4v6.4h-6.4zM474.5 734.8h6.4v6.4h-6.4zM532.1 734.8h6.1v6.4h-6.1zM341.1 741.2h5.4v6.4h-5.4zM493.7 741.2h6.4v6.4h-6.4zM506.5 741.2h6.4v6.4h-6.4zM455.3 747.6h6.4v6.4h-6.4zM506.5 747.6h6.4v6.4h-6.4zM372.1 754.0h6.4v6.4h-6.4zM404.1 754.0h6.4v6.4h-6.4zM436.1 754.0h6.4v6.4h-6.4zM448.9 754.0h6.4v6.4h-6.4zM461.7 754.0h6.4v6.4h-6.4zM468.1 754.0h6.4v6.4h-6.4zM404.1 760.4h6.4v6.4h-6.4zM423.3 760.4h6.4v6.4h-6.4zM448.9 760.4h6.4v6.4h-6.4zM455.3 760.4h6.4v6.4h-6.4zM474.5 760.4h6.4v6.4h-6.4zM487.3 760.4h6.4v6.4h-6.4zM519.3 760.4h6.4v6.4h-6.4zM352.9 766.8h6.4v6.4h-6.4zM365.7 766.8h6.4v6.4h-6.4zM448.9 766.8h6.4v6.4h-6.4zM397.7 773.2h6.4v6.4h-6.4zM416.9 773.2h6.4v6.4h-6.4zM448.9 773.2h6.4v6.4h-6.4zM461.7 779.6h6.4v6.4h-6.4zM346.5 786.0h6.4v6.4h-6.4zM455.3 786.0h6.4v6.4h-6.4zM487.3 786.0h6.4v6.4h-6.4zM519.3 786.0h6.4v6.4h-6.4zM404.1 792.4h6.4v6.4h-6.4zM416.9 792.4h6.4v6.4h-6.4zM429.7 792.4h6.4v6.4h-6.4zM525.7 792.4h6.4v6.4h-6.4zM378.5 798.8h6.4v6.4h-6.4zM416.9 798.8h6.4v6.4h-6.4zM436.1 798.8h6.4v6.4h-6.4zM474.5 798.8h6.4v6.4h-6.4zM525.7 798.8h6.4v6.4h-6.4zM352.9 805.2h6.4v6.4h-6.4zM365.7 811.6h6.4v6.4h-6.4zM416.9 811.6h6.4v6.4h-6.4zM436.1 811.6h6.4v6.4h-6.4zM455.3 811.6h6.4v6.4h-6.4zM461.7 811.6h6.4v6.4h-6.4zM487.3 811.6h6.4v6.4h-6.4zM493.7 811.6h6.4v6.4h-6.4zM500.1 811.6h6.4v6.4h-6.4zM365.7 818.0h6.4v6.4h-6.4zM410.5 818.0h6.4v6.4h-6.4zM416.9 818.0h6.4v6.4h-6.4zM448.9 818.0h6.4v6.4h-6.4zM474.5 818.0h6.4v6.4h-6.4zM487.3 818.0h6.4v6.4h-6.4zM525.7 818.0h6.4v6.4h-6.4zM365.7 824.4h6.4v6.4h-6.4zM493.7 824.4h6.4v6.4h-6.4zM372.1 830.8h6.4v6.4h-6.4zM480.9 830.8h6.4v6.4h-6.4zM487.3 830.8h6.4v6.4h-6.4zM384.9 837.2h6.4v6.4h-6.4zM448.9 837.2h6.4v6.4h-6.4zM493.7 837.2h6.4v6.4h-6.4zM506.5 837.2h6.4v6.4h-6.4zM365.7 843.6h6.4v6.4h-6.4zM525.7 843.6h6.4v6.4h-6.4zM404.1 850.0h6.4v5.0h-6.4zM519.3 850.0h6.4v5.0h-6.4zM525.7 850.0h6.4v5.0h-6.4z"/>
<path fill="#dddddd" d="M448.9 723.8h6.4v4.6h-6.4zM442.5 728.4h6.4v6.4h-6.4zM525.7 728.4h6.4v6.4h-6.4zM372.1 734.8h6.4v6.4h-6.4zM500.1 734.8h6.4v6.4h-6.4zM365.7 741.2h6.4v6.4h-6.4zM487.3 741.2h6.4v6.4h-6.4zM341.1 760.4h5.4v6.4h-5.4zM442.5 760.4h6.4v6.4h-6.4zM512.9 760.4h6.4v6.4h-6.4zM346.5 766.8h6.4v6.4h-6.4zM429.7 766.8h6.4v6.4h-6.4zM442.5 766.8h6.4v6.4h-6.4zM506.5 766.8h6.4v6.4h-6.4zM532.1 766.8h6.1v6.4h-6.1zM346.5 773.2h6.4v6.4h-6.4zM365.7 779.6h6.4v6.4h-6.4zM378.5 779.6h6.4v6.4h-6.4zM384.9 779.6h6.4v6.4h-6.4zM404.1 779.6h6.4v6.4h-6.4zM468.1 779.6h6.4v6.4h-6.4zM500.1 779.6h6.4v6.4h-6.4zM341.1 792.4h5.4v6.4h-5.4zM391.3 792.4h6.4v6.4h-6.4zM455.3 792.4h6.4v6.4h-6.4zM404.1 798.8h6.4v6.4h-6.4zM359.3 805.2h6.4v6.4h-6.4zM384.9 811.6h6.4v6.4h-6.4zM442.5 811.6h6.4v6.4h-6.4zM512.9 811.6h6.4v6.4h-6.4zM455.3 824.4h6.4v6.4h-6.4zM474.5 824.4h6.4v6.4h-6.4zM525.7 824.4h6.4v6.4h-6.4zM384.9 830.8h6.4v6.4h-6.4zM404.1 830.8h6.4v6.4h-6.4zM500.1 830.8h6.4v6.4h-6.4zM397.7 837.2h6.4v6.4h-6.4zM442.5 837.2h6.4v6.4h-6.4zM461.7 837.2h6.4v6.4h-6.4zM468.1 837.2h6.4v6.4h-6.4zM532.1 837.2h6.1v6.4h-6.1zM448.9 843.6h6.4v6.4h-6.4zM519.3 843.6h6.4v6.4h-6.4zM455.3 850.0h6.4v5.0h-6.4zM480.9 850.0h6.4v5.0h-6.4zM512.9 850.0h6.4v5.0h-6.4z"/>
<path fill="#d2d2d2" d="M423.3 723.8h6.4v4.6h-6.4zM468.1 723.8h6.4v4.6h-6.4zM372.1 728.4h6.4v6.4h-6.4zM461.7 728.4h6.4v6.4h-6.4zM474.5 728.4h6.4v6.4h-6.4zM384.9 734.8h6.4v6.4h-6.4zM410.5 734.8h6.4v6.4h-6.4zM372.1 741.2h6.4v6.4h-6.4zM448.9 741.2h6.4v6.4h-6.4zM352.9 747.6h6.4v6.4h-6.4zM365.7 747.6h6.4v6.4h-6.4zM448.9 747.6h6.4v6.4h-6.4zM461.7 747.6h6.4v6.4h-6.4zM493.7 747.6h6.4v6.4h-6.4zM525.7 747.6h6.4v6.4h-6.4zM365.7 754.0h6.4v6.4h-6.4zM416.9 754.0h6.4v6.4h-6.4zM442.5 754.0h6.4v6.4h-6.4zM455.3 754.0h6.4v6.4h-6.4zM352.9 760.4h6.4v6.4h-6.4zM397.7 760.4h6.4v6.4h-6.4zM468.1 760.4h6.4v6.4h-6.4zM493.7 760.4h6.4v6.4h-6.4zM372.1 766.8h6.4v6.4h-6.4zM410.5 766.8h6.4v6.4h-6.4zM461.7 766.8h6.4v6.4h-6.4zM384.9 773.2h6.4v6.4h-6.4zM391.3 779.6h6.4v6.4h-6.4zM410.5 779.6h6.4v6.4h-6.4zM506.5 779.6h6.4v6.4h-6.4zM519.3 779.6h6.4v6.4h-6.4zM341.1 786.0h5.4v6.4h-5.4zM391.3 786.0h6.4v6.4h-6.4zM461.7 786.0h6.4v6.4h-6.4zM372.1 798.8h6.4v6.4h-6.4zM410.5 798.8h6.4v6.4h-6.4zM448.9 798.8h6.4v6.4h-6.4zM461.7 798.8h6.4v6.4h-6.4zM416.9 805.2h6.4v6.4h-6.4zM423.3 805.2h6.4v6.4h-6.4zM442.5 805.2h6.4v6.4h-6.4zM474.5 805.2h6.4v6.4h-6.4zM404.1 811.6h6.4v6.4h-6.4zM448.9 811.6h6.4v6.4h-6.4zM506.5 811.6h6.4v6.4h-6.4zM519.3 811.6h6.4v6.4h-6.4zM493.7 818.0h6.4v6.4h-6.4zM423.3 824.4h6.4v6.4h-6.4zM442.5 824.4h6.4v6.4h-6.4zM468.1 824.4h6.4v6.4h-6.4zM500.1 824.4h6.4v6.4h-6.4zM512.9 824.4h6.4v6.4h-6.4zM346.5 830.8h6.4v6.4h-6.4zM359.3 830.8h6.4v6.4h-6.4zM365.7 830.8h6.4v6.4h-6.4zM468.1 830.8h6.4v6.4h-6.4zM512.9 830.8h6.4v6.4h-6.4zM341.1 837.2h5.4v6.4h-5.4zM436.1 837.2h6.4v6.4h-6.4zM372.1 843.6h6.4v6.4h-6.4zM455.3 843.6h6.4v6.4h-6.4zM341.1 850.0h5.4v5.0h-5.4zM378.5 850.0h6.4v5.0h-6.4zM384.9 850.0h6.4v5.0h-6.4zM442.5 850.0h6.4v5.0h-6.4zM448.9 850.0h6.4v5.0h-6.4zM532.1 850.0h6.1v5.0h-6.1z"/>
<path fill="#c4c4c4" d="M404.1 723.8h6.4v4.6h-6.4zM404.1 728.4h6.4v6.4h-6.4zM448.9 734.8h6.4v6.4h-6.4zM429.7 741.2h6.4v6.4h-6.4zM436.1 741.2h6.4v6.4h-6.4zM500.1 741.2h6.4v6.4h-6.4zM346.5 760.4h6.4v6.4h-6.4zM442.5 786.0h6.4v6.4h-6.4zM448.9 786.0h6.4v6.4h-6.4zM512.9 786.0h6.4v6.4h-6.4zM512.9 792.4h6.4v6.4h-6.4zM384.9 805.2h6.4v6.4h-6.4zM500.1 837.2h6.4v6.4h-6.4z"/>
<path fill="#b2b2b2" d="M525.7 734.8h6.4v6.4h-6.4zM525.7 754.0h6.4v6.4h-6.4zM506.5 773.2h6.4v6.4h-6.4zM359.3 779.6h6.4v6.4h-6.4zM404.1 824.4h6.4v6.4h-6.4z"/>
<path fill="#8c8c8c" d="M410.5 747.6h6.4v6.4h-6.4zM532.1 754.0h6.1v6.4h-6.1zM480.9 773.2h6.4v6.4h-6.4zM500.1 773.2h6.4v6.4h-6.4zM372.1 779.6h6.4v6.4h-6.4zM352.9 792.4h6.4v6.4h-6.4zM410.5 824.4h6.4v6.4h-6.4zM429.7 843.6h6.4v6.4h-6.4z"/>
</svg>
<svg class="abs" style="left:0;top:0" width="1688" height="1080" viewBox="0 0 1688 1080" fill="none" stroke="#2668c5" stroke-width="2.2" stroke-linecap="round" stroke-linejoin="round">
<!-- header icons -->
<g stroke-linejoin="round"><rect x="1555.6" y="122.4" width="8.1" height="8.2" rx=".6"/><rect x="1568.7" y="122.4" width="8.1" height="8.2" rx=".6"/><rect x="1555.6" y="135.4" width="8.1" height="8.2" rx=".6"/><rect x="1568.7" y="135.4" width="8.1" height="8.2" rx=".6"/></g>
<circle cx="1622.4" cy="133" r="11.6"/>
<path d="M1618.5 129.9A3.95 3.95 0 1 1 1625 132.9Q1622.4 134.4 1622.4 136.6" stroke-width="2.4"/><circle cx="1622.4" cy="140.2" r="1.5" fill="#2668c5" stroke="none"/>
<circle cx="1678.5" cy="133" r="11.6"/>
<path d="M1674.6 127.4Q1678.5 124.6 1682.4 127.4Q1682.2 134.4 1678.5 135.4Q1674.8 134.4 1674.6 127.4Z" stroke-width="2"/>
<path d="M1669.4 139.6Q1672.6 136.6 1678.5 138.4Q1684.4 136.6 1687.6 139.6" stroke-width="2"/>
<!-- popup icon -->
<g stroke-width="2.1"><path d="M328.8 205.1V202.2Q328.8 200.4 330.6 200.4H343.5Q345.3 200.4 345.3 202.2V215.2Q345.3 217 343.5 217H340.4"/><rect x="329" y="211.1" width="5.9" height="5.9" rx=".5"/><path d="M335 211L340.4 205.4M335.8 205.1H340.7V210.1"/></g>
<!-- add widget -->
<rect x="1242.9" y="200.2" width="16.8" height="16.4" rx="3.4" stroke-width="2.1"/><path d="M1246.7 208.6H1256M1251.3 204V213.2" stroke-width="2.2"/>
<!-- download -->
<path d="M1453.8 201.3V211.4M1449 207.3L1453.8 212L1458.6 207.3M1446.9 213.2V215.7H1461V213.2" stroke-width="2.3"/>
<!-- send -->
<path d="M1600.2 202.1L1615.7 208.7L1600.2 215.4L1602.6 208.7Z" stroke-width="2.2"/>
</svg>
<svg class="abs" style="left:0;top:0" width="1688" height="1080" viewBox="0 0 1688 1080">
<!-- gears -->
<circle cx="1663.4" cy="689.3" r="5.95" fill="none" stroke="#2668c5" stroke-width="2.7"/>
<path d="M1663.40 682.70L1663.40 681.30M1658.73 684.63L1657.74 683.64M1656.80 689.30L1655.40 689.30M1658.73 693.97L1657.74 694.96M1663.40 695.90L1663.40 697.30M1668.07 693.97L1669.06 694.96M1670.00 689.30L1671.40 689.30M1668.07 684.63L1669.06 683.64" stroke="#2668c5" stroke-width="3.1" stroke-linecap="round" fill="none"/>
<circle cx="1663.4" cy="1017.4" r="5.95" fill="none" stroke="#2668c5" stroke-width="2.7"/>
<path d="M1663.40 1010.80L1663.40 1009.40M1658.73 1012.73L1657.74 1011.74M1656.80 1017.40L1655.40 1017.40M1658.73 1022.07L1657.74 1023.06M1663.40 1024.00L1663.40 1025.40M1668.07 1022.07L1669.06 1023.06M1670.00 1017.40L1671.40 1017.40M1668.07 1012.73L1669.06 1011.74" stroke="#2668c5" stroke-width="3.1" stroke-linecap="round" fill="none"/>
</svg>
<!--OV-END-->
</div>
  </div>
</div>
</body>
</html>
